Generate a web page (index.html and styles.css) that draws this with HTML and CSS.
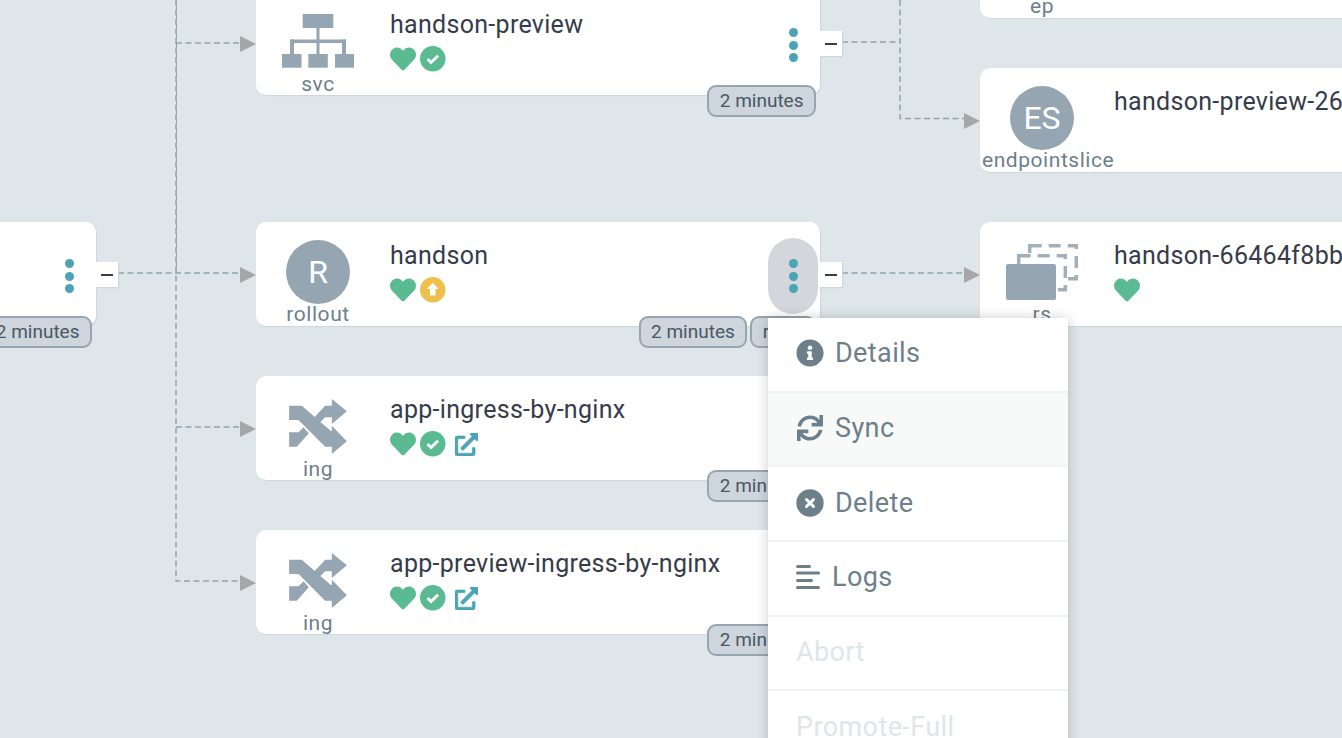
FILE: index.html
```html
<!DOCTYPE html>
<html lang="en">
<head>
<meta charset="utf-8">
<title>Application tree</title>
<link rel="stylesheet" href="styles.css">
</head>
<body>
<main class="canvas">
  <svg class="edges" width="1342" height="738" viewBox="0 0 1342 738">
    <g class="edge">
      <path d="M118 273H241"/>
      <path d="M176 0V581H241"/>
      <path class="edge-b" d="M176.500 0V273"/>
      <path d="M176 43H241"/>
      <path d="M176 427H241"/>
      <path d="M842 42H900"/>
      <path d="M900 0V118.500H965"/>
      <path d="M842 273H965"/>
    </g>
    <g class="arrow">
      <path d="M240 36 256 44 240 52Z"/>
      <path d="M240 267 256 275 240 283Z"/>
      <path d="M240 421 256 429 240 437Z"/>
      <path d="M240 575 256 583 240 591Z"/>
      <path d="M964 113 980 121 964 129Z"/>
      <path d="M964 267 980 275 964 283Z"/>
    </g>
  </svg>

  <article class="node node-left">
    <div class="actions"><span class="dot"></span><span class="dot"></span><span class="dot"></span></div>
    <div class="toggle"><span class="minus"></span></div>
    <div class="badges"><span class="badge">2 minutes</span></div>
  </article>

  <article class="node node-ep">
    <div class="kind"><div class="icon-box"></div><div class="kind-label">ep</div></div>
    <div class="info"><div class="title">handson-preview</div></div>
  </article>

  <article class="node node-svc">
    <div class="kind">
      <div class="icon-box icon-svc">
        <svg width="72" height="54" viewBox="0 0 72 54"><g class="glyph"><rect x="20.700" y="0" width="30.600" height="14"/><rect x="34.500" y="14" width="3" height="26"/><rect x="8" y="25.500" width="56" height="3.500"/><rect x="8" y="25.500" width="4" height="15"/><rect x="60" y="25.500" width="4" height="15"/><rect x="0" y="40" width="19.500" height="13.700"/><rect x="26.300" y="40" width="19.500" height="13.700"/><rect x="53" y="40" width="19" height="13.700"/></g></svg>
      </div>
      <div class="kind-label">svc</div>
    </div>
    <div class="info">
      <div class="title">handson-preview</div>
      <div class="status">
        <svg class="st st-heart" viewBox="0 0 512 512"><path d="M462.300 62.600C407.500 15.900 326 22.700 275.700 74.100L256 94.300l-19.700-20.300C186.100 22.700 104.500 15.900 49.700 62.600c-62.800 53.600-66.100 149.800-9.900 207.900l193.500 199.800c12.500 12.900 32.800 12.900 45.300 0l193.500-199.800c56.300-58.100 53-154.300-9.800-207.900z"/></svg>
        <svg class="st st-circle" viewBox="0 0 26 26"><circle class="c-green" cx="13" cy="13" r="13"/><path class="tick" d="M7.600 13.300 11.300 16.800 18.400 10"/></svg>
      </div>
    </div>
    <div class="actions"><span class="dot"></span><span class="dot"></span><span class="dot"></span></div>
    <div class="toggle"><span class="minus"></span></div>
    <div class="badges"><span class="badge">2 minutes</span></div>
  </article>

  <article class="node node-es">
    <div class="kind">
      <div class="icon-box"><div class="disc">ES</div></div>
      <div class="kind-label">endpointslice</div>
    </div>
    <div class="info"><div class="title">handson-preview-26d5c</div></div>
  </article>

  <article class="node node-rollout">
    <div class="kind">
      <div class="icon-box"><div class="disc">R</div></div>
      <div class="kind-label">rollout</div>
    </div>
    <div class="info">
      <div class="title">handson</div>
      <div class="status">
        <svg class="st st-heart" viewBox="0 0 512 512"><path d="M462.300 62.600C407.500 15.900 326 22.700 275.700 74.100L256 94.300l-19.700-20.300C186.100 22.700 104.500 15.900 49.700 62.600c-62.800 53.600-66.100 149.800-9.900 207.900l193.500 199.800c12.500 12.900 32.800 12.900 45.300 0l193.500-199.800c56.300-58.100 53-154.300-9.800-207.900z"/></svg>
        <svg class="st st-circle" viewBox="0 0 26 26"><circle class="c-yellow" cx="13" cy="13" r="13"/><path class="up" d="M13 5.800 19 12.300H15.800V18.800H10.200V12.300H7Z"/></svg>
      </div>
    </div>
    <div class="actions actions-open"><span class="dot"></span><span class="dot"></span><span class="dot"></span></div>
    <div class="toggle"><span class="minus"></span></div>
    <div class="badges"><span class="badge">2 minutes</span><span class="badge">rev:1</span></div>
  </article>

  <article class="node node-rs">
    <div class="kind">
      <div class="icon-box icon-rs">
        <svg width="72" height="56" viewBox="0 0 72 56">
          <rect class="rs-back" x="23.700" y="1.700" width="46.600" height="33"/>
          <rect class="rs-back" x="12.700" y="11.700" width="46.600" height="34"/>
          <rect class="rs-front" x="0" y="20" width="50" height="36" rx="2"/>
        </svg>
      </div>
      <div class="kind-label">rs</div>
    </div>
    <div class="info">
      <div class="title">handson-66464f8bb9</div>
      <div class="status">
        <svg class="st st-heart" viewBox="0 0 512 512"><path d="M462.300 62.600C407.500 15.900 326 22.700 275.700 74.100L256 94.300l-19.700-20.300C186.100 22.700 104.500 15.900 49.700 62.600c-62.800 53.600-66.100 149.800-9.900 207.900l193.500 199.800c12.500 12.900 32.800 12.900 45.300 0l193.500-199.800c56.300-58.100 53-154.300-9.800-207.900z"/></svg>
      </div>
    </div>
  </article>

  <article class="node node-ing1">
    <div class="kind">
      <div class="icon-box icon-ing">
        <svg width="58" height="55" viewBox="357 85 173 165"><path class="glyph" d="M357 105H395L482 181H485V165L530 212 485 250V228H465L385 148H357ZM485 85 530 122 485 160V140H465L446 159 430 143 465 105H485ZM357 228V185H385L400 170 416 188 380 228Z"/></svg>
      </div>
      <div class="kind-label">ing</div>
    </div>
    <div class="info">
      <div class="title">app-ingress-by-nginx</div>
      <div class="status">
        <svg class="st st-heart" viewBox="0 0 512 512"><path d="M462.300 62.600C407.500 15.900 326 22.700 275.700 74.100L256 94.300l-19.700-20.300C186.100 22.700 104.500 15.900 49.700 62.600c-62.800 53.600-66.100 149.800-9.900 207.900l193.500 199.800c12.500 12.900 32.800 12.900 45.300 0l193.500-199.800c56.300-58.100 53-154.300-9.800-207.900z"/></svg>
        <svg class="st st-circle" viewBox="0 0 26 26"><circle class="c-green" cx="13" cy="13" r="13"/><path class="tick" d="M7.600 13.300 11.300 16.800 18.400 10"/></svg>
        <svg class="st-link" viewBox="0 0 512 512"><path d="M432,320H400a16,16,0,0,0-16,16V448H64V128H208a16,16,0,0,0,16-16V80a16,16,0,0,0-16-16H48A48,48,0,0,0,0,112V464a48,48,0,0,0,48,48H400a48,48,0,0,0,48-48V336A16,16,0,0,0,432,320ZM488,0h-128c-21.370,0-32.050,25.910-17,41l35.730,35.730L135,320.370a24,24,0,0,0,0,34L157.670,377a24,24,0,0,0,34,0L435.280,133.320,471,169c15,15,41,4.500,41-17V24A24,24,0,0,0,488,0Z"/></svg>
      </div>
    </div>
    <div class="badges"><span class="badge">2 minutes</span></div>
  </article>

  <article class="node node-ing2">
    <div class="kind">
      <div class="icon-box icon-ing">
        <svg width="58" height="55" viewBox="357 85 173 165"><path class="glyph" d="M357 105H395L482 181H485V165L530 212 485 250V228H465L385 148H357ZM485 85 530 122 485 160V140H465L446 159 430 143 465 105H485ZM357 228V185H385L400 170 416 188 380 228Z"/></svg>
      </div>
      <div class="kind-label">ing</div>
    </div>
    <div class="info">
      <div class="title">app-preview-ingress-by-nginx</div>
      <div class="status">
        <svg class="st st-heart" viewBox="0 0 512 512"><path d="M462.300 62.600C407.500 15.900 326 22.700 275.700 74.100L256 94.300l-19.700-20.300C186.100 22.700 104.500 15.900 49.700 62.600c-62.800 53.600-66.100 149.800-9.900 207.900l193.500 199.800c12.500 12.900 32.800 12.900 45.300 0l193.500-199.800c56.300-58.100 53-154.300-9.800-207.900z"/></svg>
        <svg class="st st-circle" viewBox="0 0 26 26"><circle class="c-green" cx="13" cy="13" r="13"/><path class="tick" d="M7.600 13.300 11.300 16.800 18.400 10"/></svg>
        <svg class="st-link" viewBox="0 0 512 512"><path d="M432,320H400a16,16,0,0,0-16,16V448H64V128H208a16,16,0,0,0,16-16V80a16,16,0,0,0-16-16H48A48,48,0,0,0,0,112V464a48,48,0,0,0,48,48H400a48,48,0,0,0,48-48V336A16,16,0,0,0,432,320ZM488,0h-128c-21.370,0-32.050,25.910-17,41l35.730,35.730L135,320.370a24,24,0,0,0,0,34L157.670,377a24,24,0,0,0,34,0L435.280,133.320,471,169c15,15,41,4.500,41-17V24A24,24,0,0,0,488,0Z"/></svg>
      </div>
    </div>
    <div class="badges"><span class="badge">2 minutes</span></div>
  </article>

  <nav class="menu">
    <div class="menu-item">
      <svg class="mi-icon" viewBox="0 0 512 512"><path d="M256 8C119.043 8 8 119.083 8 256c0 136.997 111.043 248 248 248s248-111.003 248-248C504 119.083 392.957 8 256 8zm0 110c23.196 0 42 18.804 42 42s-18.804 42-42 42-42-18.804-42-42 18.804-42 42-42zm56 254c0 6.627-5.373 12-12 12h-88c-6.627 0-12-5.373-12-12v-24c0-6.627 5.373-12 12-12h12v-64h-12c-6.627 0-12-5.373-12-12v-24c0-6.627 5.373-12 12-12h64c6.627 0 12 5.373 12 12v100h12c6.627 0 12 5.373 12 12v24z"/></svg>
      <span>Details</span>
    </div>
    <div class="menu-item menu-item-hover">
      <svg class="mi-icon mi-sync" viewBox="0 0 512 512"><path d="M440.650 12.570l4 82.770A247.160 247.160 0 0 0 255.830 8C134.730 8 33.910 94.920 12.290 209.820A12 12 0 0 0 24.090 224h49.050a12 12 0 0 0 11.670-9.260 175.910 175.910 0 0 1 317-56.940l-101.460-4.860a12 12 0 0 0-12.570 12v47.410a12 12 0 0 0 12 12H500a12 12 0 0 0 12-12V12a12 12 0 0 0-12-12h-47.370a12 12 0 0 0-11.980 12.570zM255.830 432a175.610 175.610 0 0 1-146-77.800l101.800 4.870a12 12 0 0 0 12.570-12v-47.400a12 12 0 0 0-12-12H12a12 12 0 0 0-12 12V500a12 12 0 0 0 12 12h47.350a12 12 0 0 0 12-12.600l-4.150-82.570A247.170 247.170 0 0 0 255.830 504c121.110 0 221.930-86.920 243.550-201.820a12 12 0 0 0-11.800-14.180h-49.050a12 12 0 0 0-11.670 9.260A175.860 175.860 0 0 1 255.830 432z"/></svg>
      <span>Sync</span>
    </div>
    <div class="menu-item">
      <svg class="mi-icon" viewBox="0 0 28 28"><circle class="mi-disc" cx="14" cy="14" r="13.700"/><path class="mi-x" d="M10.500 10.500 17.500 17.500M17.500 10.500 10.500 17.500"/></svg>
      <span>Delete</span>
    </div>
    <div class="menu-item menu-item-logs">
      <svg class="mi-logs" viewBox="0 0 24 24"><rect y="0" width="15" height="3" rx="1.500"/><rect y="6.500" width="24" height="3" rx="1.500"/><rect y="14" width="17" height="3" rx="1.500"/><rect y="21" width="24" height="3" rx="1.500"/></svg>
      <span>Logs</span>
    </div>
    <div class="menu-item menu-item-off"><span>Abort</span></div>
    <div class="menu-item menu-item-off"><span>Promote-Full</span></div>
  </nav>
</main>
</body>
</html>
```

FILE: styles.css
```css
* { box-sizing: border-box; }
html, body { margin: 0; padding: 0; height: 100%; overflow: hidden; }
body { background: #dee6e9; font-family: Roboto, "Liberation Sans", sans-serif; }

.canvas { position: relative; width: 1342px; height: 738px; overflow: hidden; }

.edges { position: absolute; left: 0; top: 0; }
.edge path { fill: none; stroke: #8fa4b1; stroke-width: 1.500; stroke-dasharray: 6 3.500; }
.edge .edge-b { stroke-dashoffset: 5; stroke-width: 1; }
.arrow path { fill: #a6a6a6; }

.node {
  position: absolute;
  width: 564px;
  height: 104px;
  display: flex;
  background: #fff;
  border-radius: 10px;
  box-shadow: 1px 1px 1px #ccd6dd;
}
.node-left { left: -468px; top: 222px; }
.node-ep { left: 980px; top: -86px; }
.node-svc { left: 256px; top: -9px; }
.node-es { left: 980px; top: 68px; }
.node-rollout { left: 256px; top: 222px; }
.node-rs { left: 980px; top: 222px; }
.node-ing1 { left: 256px; top: 376px; }
.node-ing2 { left: 256px; top: 530px; }

.kind { width: 124px; flex: none; padding: 18px 2px 0; text-align: center; }
.icon-box { height: 64px; display: flex; justify-content: center; }
.icon-svc { margin-top: 5px; height: 60px; }
.icon-rs { margin-top: 4px; height: 60px; }
.icon-ing { margin-top: 5px; height: 60px; }
.kind-label { font-size: 21px; letter-spacing: .55px; line-height: 21px; color: #6d7f8b; white-space: nowrap; }

.disc {
  width: 64px;
  height: 64px;
  border-radius: 50%;
  background: #95a5b2;
  color: #fff;
  font-size: 32px;
  line-height: 64px;
  text-align: center;
}

.glyph { fill: #95a5b2; }
.glyph rect { fill: #95a5b2; }
.rs-back { fill: #fff; stroke: #a1b1bc; stroke-width: 3.500; stroke-dasharray: 12 7; }
.rs-front { fill: #95a5b2; }

.info { flex: 1; min-width: 0; padding: 18px 0 0 10px; }
.title { font-size: 25px; letter-spacing: .3px; line-height: 32px; color: #363c4a; white-space: nowrap; }
.status { display: flex; align-items: center; gap: 4px; height: 26px; margin-top: 5px; }
.st { flex: none; }
.st-heart { width: 26px; height: 26px; fill: #5abb93; }
.st-circle { width: 25.500px; height: 25.500px; }
.c-green { fill: #5abb93; }
.c-yellow { fill: #edc04d; }
.tick { fill: none; stroke: #fff; stroke-width: 3; }
.up { fill: #fff; }
.st-link { width: 23px; height: 23px; margin-left: 5.500px; fill: #4aa3b6; stroke: #4aa3b6; stroke-width: 12; }

.actions {
  position: absolute;
  right: 2px;
  top: 16px;
  width: 50px;
  height: 76px;
  border-radius: 25px;
  display: flex;
  flex-direction: column;
  align-items: center;
  justify-content: center;
  gap: 3.500px;
}
.actions-open { background: #d3d6da; }
.dot { width: 9px; height: 9px; border-radius: 50%; background: #4aa3b6; }

.toggle {
  position: absolute;
  left: 100%;
  top: 40px;
  width: 22px;
  height: 25px;
  display: flex;
  align-items: center;
  justify-content: center;
  background: #fff;
  box-shadow: 1px 1px 1px #ccd6dd;
}
.minus { width: 12px; height: 2px; background: #363c4a; }

.badges { position: absolute; right: 4px; bottom: -22px; display: flex; gap: 3px; }
.badge {
  display: block;
  height: 32px;
  padding: 0 10.500px;
  border: 2px solid #95a5b2;
  border-radius: 9px;
  background: #ced5dd;
  color: #495763;
  font-size: 19px;
  line-height: 28px;
  white-space: nowrap;
}

.menu {
  position: absolute;
  left: 768px;
  top: 318px;
  width: 300px;
  height: 440px;
  background: #fff;
  box-shadow: 0 0 12px rgba(0, 0, 0, .2);
}
.menu-item {
  height: 74.700px;
  display: flex;
  align-items: center;
  gap: 11px;
  padding: 0 0 2px 28px;
  border-bottom: 2px solid #eff3f5;
  color: #6d7f8b;
  font-size: 27px;
  letter-spacing: .4px;
}
.menu-item-hover { background: #f8fafa; }
.menu-item-off { color: #dee6eb; }
.menu-item-logs { gap: 12px; }
.mi-icon { width: 28px; height: 28px; fill: #6d7f8b; flex: none; }
.mi-sync { width: 26px; height: 26px; margin: 0 1px; }
.mi-disc { fill: #6d7f8b; }
.mi-x { fill: none; stroke: #fff; stroke-width: 3; stroke-linecap: round; }
.mi-logs { width: 24px; height: 24px; fill: #6d7f8b; flex: none; }
```
